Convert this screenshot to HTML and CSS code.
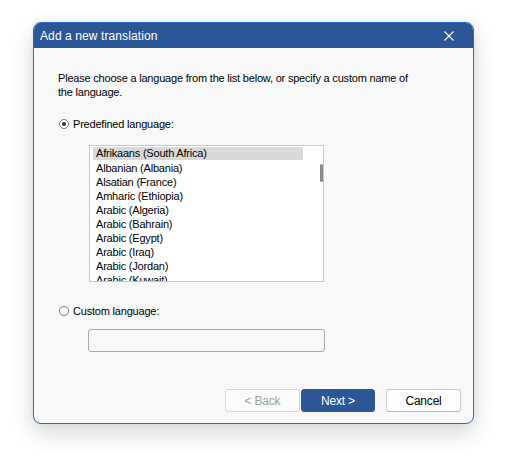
FILE: index.html
```html
<!DOCTYPE html>
<html>
<head>
<meta charset="utf-8">
<link rel="stylesheet" href="styles.css">
</head>
<body>
<div class="dialog">
  <div class="titlebar">
    <span class="title">Add a new translation</span>
    <svg class="close" width="10" height="10" viewBox="0 0 10 10"><path d="M0.5 0.5 L9.5 9.5 M9.5 0.5 L0.5 9.5" stroke="#ffffff" stroke-width="1.1" fill="none"/></svg>
  </div>
  <div class="content">
    <p class="intro">Please choose a language from the list below, or specify a custom name of the language.</p>
    <label class="radio-row">
      <span class="radio checked"><span class="dot"></span></span>
      <span>Predefined language:</span>
    </label>
    <div class="listbox">
      <div class="item selected">Afrikaans (South Africa)</div>
      <div class="item">Albanian (Albania)</div>
      <div class="item">Alsatian (France)</div>
      <div class="item">Amharic (Ethiopia)</div>
      <div class="item">Arabic (Algeria)</div>
      <div class="item">Arabic (Bahrain)</div>
      <div class="item">Arabic (Egypt)</div>
      <div class="item">Arabic (Iraq)</div>
      <div class="item">Arabic (Jordan)</div>
      <div class="item">Arabic (Kuwait)</div>
      <div class="thumb"></div>
    </div>
    <label class="radio-row custom">
      <span class="radio"></span>
      <span>Custom language:</span>
    </label>
    <div class="textfield"></div>
    <div class="buttons">
      <button class="btn disabled">&lt; Back</button>
      <button class="btn primary">Next &gt;</button>
      <button class="btn cancel">Cancel</button>
    </div>
  </div>
</div>
</body>
</html>
```
FILE: styles.css
```css
html, body {
  margin: 0;
  padding: 0;
  background: #ffffff;
}
body {
  width: 507px;
  height: 469px;
  overflow: hidden;
  font-family: "Liberation Sans", Arial, sans-serif;
  font-size: 11px;
  color: #000000;
}
.dialog {
  box-sizing: border-box;
  width: 441px;
  height: 402px;
  margin: 22px 0 0 33px;
  border: 1px solid #2769c6;
  border-radius: 8px;
  background: #f8f8f8;
  box-shadow: 0 9px 24px rgba(0, 0, 0, 0.16), 0 0 6px rgba(0, 0, 0, 0.06);
  overflow: hidden;
  display: flex;
  flex-direction: column;
}
.titlebar {
  height: 25px;
  flex: none;
  background: #2b5797;
  color: #ffffff;
  display: flex;
  align-items: center;
  justify-content: space-between;
  padding: 0 19px 0 6px;
}
.title {
  font-size: 12px;
  letter-spacing: 0.1px;
}
.close {
  display: block;
}
.content {
  flex: 1;
  display: flex;
  flex-direction: column;
  padding: 23px 12px 11px 24px;
  line-height: 14px;
  letter-spacing: -0.2px;
}
.intro {
  margin: 0;
  width: 356px;
}
.radio-row {
  display: flex;
  align-items: center;
  gap: 4px;
  margin-top: 18px;
  margin-left: 1px;
  height: 14px;
}
.radio {
  box-sizing: border-box;
  width: 10px;
  height: 10px;
  border: 1px solid #7a7a7a;
  border-radius: 50%;
  background: #fdfdfd;
  display: flex;
  align-items: center;
  justify-content: center;
}
.dot {
  width: 4px;
  height: 4px;
  border-radius: 50%;
  background: #333333;
}
.listbox {
  position: relative;
  box-sizing: border-box;
  width: 235px;
  height: 137px;
  margin: 14px 0 0 31px;
  border: 1px solid #c8c8c8;
  background: #ffffff;
  padding: 1px 0 0 3px;
  overflow: hidden;
}
.item {
  width: 210px;
  height: 14px;
  line-height: 14px;
  padding-left: 3px;
  box-sizing: border-box;
  white-space: nowrap;
}
.item.selected {
  background: #d9d9d9;
  height: 13px;
  line-height: 13px;
  margin-bottom: 1px;
}
.thumb {
  position: absolute;
  left: 230px;
  top: 18px;
  width: 3px;
  height: 18px;
  border-radius: 1.5px;
  background: #8a8a8a;
}
.radio-row.custom {
  margin-top: 22px;
}
.textfield {
  box-sizing: border-box;
  width: 237px;
  height: 23px;
  margin: 11px 0 0 30px;
  border: 1px solid #a8a8a8;
  border-radius: 3px;
  background: #f8f8f8;
}
.buttons {
  margin-top: auto;
  display: flex;
  justify-content: flex-end;
}
.btn {
  box-sizing: border-box;
  width: 75px;
  height: 23px;
  font-family: "Liberation Sans", Arial, sans-serif;
  font-size: 12px;
  letter-spacing: -0.2px;
  border-radius: 3px;
  border: 1px solid #d0d0d0;
  background: #fdfdfd;
  color: #000000;
  padding: 0;
}
.btn.disabled {
  color: #a0a0a0;
  border-color: #d6d6d6;
  background: #fbfbfb;
}
.btn.primary {
  width: 74px;
  margin-left: 1px;
  background: #2b5797;
  border-color: #2b5797;
  color: #ffffff;
}
.btn.cancel {
  margin-left: 11px;
  border-color: #cccccc;
  border-bottom-color: #b8b8b8;
}
```
